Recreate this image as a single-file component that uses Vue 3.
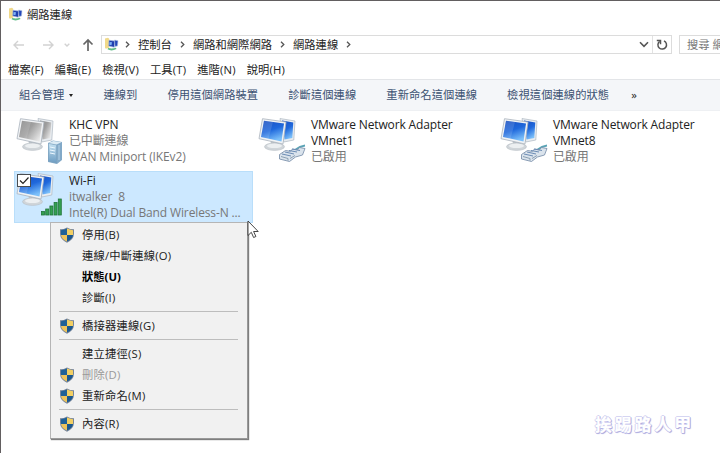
<template>
    <div class="window">
        <!-- Shared icon shapes -->
        <svg class="defs" width="0" height="0" aria-hidden="true">
            <defs>
                <linearGradient id="blue-screen" x1="0.1" y1="0" x2="0.5" y2="1">
                    <stop offset="0" stop-color="#1a4fc0" />
                    <stop offset="0.5" stop-color="#1f68dc" />
                    <stop offset="1" stop-color="#7cc0fa" />
                </linearGradient>
                <linearGradient id="gray-screen" x1="0" y1="0" x2="1" y2="0.7">
                    <stop offset="0" stop-color="#858585" />
                    <stop offset="0.5" stop-color="#a0a0a0" />
                    <stop offset="1" stop-color="#e6e6e6" />
                </linearGradient>
                <linearGradient id="server-front" x1="0" y1="0" x2="0" y2="1">
                    <stop offset="0" stop-color="#c6e2f2" />
                    <stop offset="1" stop-color="#6c9cc2" />
                </linearGradient>
            </defs>
            <symbol id="folder-net" viewBox="0 0 15 15">
                <path d="M1 1.5l3-.8 1.2 1v9l-3.4 1-.8-1z" fill="#f0d98a" />
                <path d="M5 3.2l6 .9-.7 6.2-5.6-1.4z" fill="#1f3fae" stroke="#a9bcdc" stroke-width=".6" />
                <path d="M10.5 3l3.5.7-.5 5.3-2.6.4z" fill="#2447b8" stroke="#b9c8e2" stroke-width=".6" />
                <path d="M5.6 5l2.4.3-.5 3-2.3-.5z" fill="#7fb2f4" />
                <path d="M3.5 12.3q4 2.4 9-.3l-.6-1.2q-4 1.2-7.6.2z" fill="#5fbb86" />
            </symbol>
            <symbol id="shield" viewBox="0 0 16 16">
                <path d="M8 .4Q5 2.2 1 2.3V7q.3 5.6 7 8.7Q14.7 12.6 15 7V2.3Q11 2.2 8 .4z" fill="#75849a" />
                <path d="M8 1.600Q5.500 3 2 3.200V8h6z" fill="#1f6197" />
                <path d="M8 1.600Q10.500 3 14 3.200V8H8z" fill="#f2cf63" />
                <path d="M2 8h6v6.600Q2.500 12 2 8z" fill="#eec45b" />
                <path d="M14 8H8v6.600Q13.500 12 14 8z" fill="#1a578e" />
            </symbol>
        </svg>

        <header class="title-bar">
            <svg class="title-bar__icon"><use href="#folder-net" /></svg>
            <span>網路連線</span>
        </header>

        <div class="address-row">
            <div class="nav">
                <svg class="nav__arrow" viewBox="0 0 14 12"><path d="M12 6H2M6 2L2 6l4 4" /></svg>
                <svg class="nav__arrow" viewBox="0 0 14 12"><path d="M2 6h10M8 2l4 4-4 4" /></svg>
                <svg class="nav__down" viewBox="0 0 6 4"><path d="M.7.7L3 3 5.3.7" /></svg>
                <svg class="nav__up" viewBox="0 0 12 14"><path d="M6 13V2M1.500 6.500L6 2l4.500 4.500" /></svg>
            </div>
            <div class="address">
                <svg class="address__icon"><use href="#folder-net" /></svg>
                <svg class="chevron" viewBox="0 0 5 7"><path d="M1 .8L3.800 3.500 1 6.200" /></svg>
                <template v-for="crumb in crumbs" :key="crumb">
                    <span class="address__crumb">{{ crumb }}</span>
                    <svg class="chevron" viewBox="0 0 5 7"><path d="M1 .8L3.800 3.500 1 6.200" /></svg>
                </template>
                <svg class="address__drop" viewBox="0 0 10 7"><path d="M1 1.300L5 5.300l4-4" /></svg>
                <div class="address__refresh">
                    <svg viewBox="0 0 12 12">
                        <path d="M8 1.900A4.300 4.300 0 1 1 3.600 2.400" />
                        <path d="M.8 1.500h3.700v3.700" />
                    </svg>
                </div>
            </div>
            <div class="search">搜尋 網路連線</div>
        </div>

        <nav class="menu-bar">
            <span v-for="menu in menus" :key="menu">{{ menu }}</span>
        </nav>

        <div class="toolbar">
            <span class="toolbar__organize">組合管理<i class="toolbar__caret"></i></span>
            <span v-for="command in commands" :key="command">{{ command }}</span>
            <span class="toolbar__more">»</span>
        </div>

        <main class="connections">
            <div
                v-for="item in connections"
                :key="item.name"
                class="connection"
                :class="{ 'connection--selected': item.selected }"
            >
                <svg class="connection__icon" viewBox="0 0 52 51">
                    <path d="M24 2.500l15 2.500-1.200 19-10 2z" fill="#e9edf1" stroke="#adb8c2" stroke-width=".7" />
                    <path d="M26 4.500l11.300 2-1 15.500-7.800 1.500z" :fill="screenFill(item)" />
                    <path d="M14.500 25l9 1.500-1 4h-7z" fill="#bcc3c9" />
                    <ellipse cx="18.500" cy="30.700" rx="10" ry="3.700" fill="#d0d5d9" stroke="#b7bec4" stroke-width=".6" />
                    <ellipse cx="18.500" cy="29.800" rx="7.500" ry="2.300" fill="#eceff1" />
                    <path d="M6.500 2.700l23.500 3.300-3 22L3 22.700z" fill="#f1f3f5" stroke="#a9b3bc" stroke-width=".8" />
                    <path d="M8 4.700l20 2.800-2.500 18L5 21z" :fill="screenFill(item)" />
                    <path d="M8 4.700l9 1.300-4.500 16.700L5 21z" fill="#fff" opacity=".13" />

                    <g v-if="item.badge === 'server'">
                        <path d="M34 27l5-2.500 9 1.500v18l-5 4-9-2z" fill="#82a9c8" />
                        <path d="M34.500 27.500l8 1.500v18l-8-2z" fill="url(#server-front)" stroke="#7b9fbb" stroke-width=".5" />
                        <path d="M34.500 27l5-2 8 1.300-5 2.200z" fill="#dcebf4" />
                        <path d="M36 31l5 1M36 34l5 1M36 37l5 1" stroke="#edf8ff" />
                        <path d="M45 29v15" stroke="#b7d3e7" />
                    </g>
                    <g v-else-if="item.badge === 'signal'" fill="#35a052" stroke="#217439" stroke-width=".8">
                        <rect x="27.500" y="40.500" width="3" height="3.500" />
                        <rect x="31.700" y="38" width="3" height="6" />
                        <rect x="35.900" y="35" width="3" height="9" />
                        <rect x="40.100" y="31.500" width="3" height="12.500" />
                        <rect x="44.300" y="28" width="3" height="16" />
                    </g>
                    <g v-else>
                        <path d="M39 34q5-4 10-4.500" fill="none" stroke="#5aa3b5" stroke-width="2" />
                        <path d="M23.500 38.500l6-4 5 .8 2-2.300 5 .8 2-2.300 5.500 1-2.500 6.500-7 2-6 4.500-10-2.500z" fill="#dae3ec" stroke="#7188a4" stroke-width=".8" />
                        <path d="M26 38l9 2M29 36l9 2M33 34.500l8 1.500M36 33l8 1.500" stroke="#6c8cb4" stroke-width="1" />
                        <path d="M25 40.500l7 2v2M34 42.500l5-3" fill="none" stroke="#8297ac" stroke-width=".9" />
                    </g>
                    <g v-if="item.selected">
                        <rect x="3.500" y="3.500" width="13" height="12" fill="#fff" stroke="#4a4d50" />
                        <path d="M6 9.500l3 3 5.500-6" fill="none" stroke="#222" stroke-width="1.200" />
                    </g>
                </svg>
                <div class="connection__text">
                    <div v-for="line in item.title" :key="line">{{ line }}</div>
                    <div
                        v-for="line in item.details"
                        :key="line"
                        class="connection__detail"
                    >{{ line }}</div>
                </div>
            </div>
        </main>

        <!-- Context menu of the selected connection -->
        <div class="context-menu">
            <template v-for="(entry, index) in contextMenu" :key="index">
                <div v-if="entry.separator" class="context-menu__separator"></div>
                <div
                    v-else
                    class="context-menu__item"
                    :class="{
                        'context-menu__item--bold': entry.bold,
                        'context-menu__item--disabled': entry.disabled
                    }"
                >
                    <span class="context-menu__icon">
                        <svg v-if="entry.shield"><use href="#shield" /></svg>
                    </span>
                    <span>{{ entry.label }}</span>
                </div>
            </template>
        </div>

        <svg class="cursor" viewBox="0 0 13 19">
            <path d="M1 1v14.500l3.300-3.200 2.300 5.200 2.300-1-2.300-5h4.600z" fill="#fff" stroke="#333" stroke-width=".9" />
        </svg>

        <div class="watermark">挨踢路人甲</div>
    </div>
</template>

<script setup>
const crumbs = ['控制台', '網路和網際網路', '網路連線']
const menus = ['檔案(F)', '編輯(E)', '檢視(V)', '工具(T)', '進階(N)', '說明(H)']
const commands = ['連線到', '停用這個網路裝置', '診斷這個連線', '重新命名這個連線', '檢視這個連線的狀態']

const connections = [
    { name: 'vpn', title: ['KHC VPN'], details: ['已中斷連線', 'WAN Miniport (IKEv2)'], badge: 'server', offline: true },
    { name: 'vmnet1', title: ['VMware Network Adapter', 'VMnet1'], details: ['已啟用'], badge: 'cable' },
    { name: 'vmnet8', title: ['VMware Network Adapter', 'VMnet8'], details: ['已啟用'], badge: 'cable' },
    { name: 'wifi', title: ['Wi-Fi'], details: ['itwalker  8', 'Intel(R) Dual Band Wireless-N ...'], badge: 'signal', selected: true }
]

const contextMenu = [
    { label: '停用(B)', shield: true },
    { label: '連線/中斷連線(O)' },
    { label: '狀態(U)', bold: true },
    { label: '診斷(I)' },
    { separator: true },
    { label: '橋接器連線(G)', shield: true },
    { separator: true },
    { label: '建立捷徑(S)' },
    { label: '刪除(D)', shield: true, disabled: true },
    { label: '重新命名(M)', shield: true },
    { separator: true },
    { label: '內容(R)', shield: true }
]

const screenFill = (item) => (item.offline ? 'url(#gray-screen)' : 'url(#blue-screen)')
</script>

<style>
body {
    margin: 0;
    overflow: hidden;
}
</style>

<style scoped>
.window {
    position: relative;
    box-sizing: border-box;
    width: 720px;
    height: 453px;
    overflow: hidden;
    border-top: 1px solid #625e60;
    border-left: 1px solid #625e60;
    background: #fff;
    color: #222;
    font-family: "Open Sans", "Noto Sans CJK TC", sans-serif;
    font-size: 11.3px;
    line-height: 16px;
    white-space: pre;
}

.defs {
    position: absolute;
}

.title-bar {
    display: flex;
    align-items: center;
    gap: 4px;
    height: 27px;
    padding-left: 7px;
}

.title-bar__icon {
    width: 15px;
    height: 15px;
}

.address-row {
    display: flex;
    align-items: center;
    height: 33px;
}

.nav {
    flex: none;
    display: flex;
    align-items: center;
    width: 100px;
    fill: none;
    stroke: #d2d2d2;
    stroke-width: 1.4;
}

.nav__arrow {
    width: 14px;
    height: 12px;
    margin-left: 11px;
    margin-right: 4px;
}

.nav__down {
    width: 6px;
    height: 4px;
    margin-left: 5px;
}

.nav__up {
    width: 12px;
    height: 14px;
    margin-left: 12px;
    stroke: #666;
    stroke-width: 1.7;
}

.address {
    flex: none;
    box-sizing: border-box;
    display: flex;
    align-items: center;
    width: 571px;
    height: 19px;
    border: 1px solid #dcdcdc;
}

.address__icon {
    width: 15px;
    height: 15px;
    margin: 0 6px 0 2px;
}

.chevron {
    width: 5px;
    height: 7px;
    margin-right: 1px;
    fill: none;
    stroke: #555;
    stroke-width: 1.3;
}

.address__crumb {
    margin: 0 8px 0 7px;
}

.address__drop {
    width: 10px;
    height: 7px;
    margin-left: auto;
    margin-right: 3px;
    fill: none;
    stroke: #555;
    stroke-width: 1.6;
}

.address__refresh {
    display: flex;
    align-items: center;
    justify-content: center;
    width: 18px;
    height: 17px;
    border-left: 1px solid #e2e2e2;
}

.address__refresh svg {
    width: 12px;
    height: 12px;
    fill: none;
    stroke: #555;
    stroke-width: 1.5;
}

.search {
    flex: none;
    box-sizing: border-box;
    width: 160px;
    height: 19px;
    margin-left: 7px;
    padding-left: 7px;
    border: 1px solid #dcdcdc;
    color: #777;
    line-height: 17px;
}

.menu-bar {
    display: flex;
    align-items: center;
    gap: 11px;
    height: 18px;
    padding-left: 7px;
    letter-spacing: 0.15px;
}

.toolbar {
    box-sizing: border-box;
    display: flex;
    align-items: center;
    gap: 30px;
    height: 32px;
    padding-left: 18px;
    border-top: 1px solid #e3e5e8;
    border-bottom: 1px solid #eef0f3;
    background: #f4f6f9;
    color: #3c5272;
    letter-spacing: 0.05px;
}

.toolbar__organize {
    display: flex;
    align-items: center;
}

.toolbar__caret {
    margin-left: 5px;
    border: 2.5px solid transparent;
    border-top: 3px solid #222;
    border-bottom: 0;
}

.toolbar__more {
    margin-left: -8px;
    color: #222;
}

.connections {
    display: grid;
    grid-template-columns: repeat(3, 239px);
    grid-auto-rows: 52px;
    gap: 3px;
    padding: 5px 0 0 13px;
}

.connection {
    box-sizing: border-box;
    display: flex;
    border: 1px solid transparent;
}

.connection--selected {
    background: #cce8ff;
    border-color: #b9defa;
}

.connection__icon {
    flex: none;
    width: 52px;
    height: 51px;
    margin: -1px 3px 0 -1px;
}

.connection__text {
    font-size: 12px;
    line-height: 16.2px;
    letter-spacing: -0.13px;
}

.connection--selected .connection__text {
    padding-top: 1px;
}

.connection__detail {
    color: #777;
}

.context-menu {
    position: absolute;
    left: 49px;
    top: 221px;
    box-sizing: border-box;
    width: 198px;
    height: 217px;
    padding: 1px;
    border: 1px solid #b5b5b5;
    border-right-color: #999;
    border-bottom-color: #999;
    background: #f1f1f1;
    box-shadow: 1px 1px 1px rgba(0, 0, 0, 0.5);
    line-height: 21px;
    letter-spacing: 0.2px;
}

.context-menu__item {
    display: flex;
    height: 21px;
}

.context-menu__item--bold {
    color: #000;
    font-weight: 700;
    letter-spacing: 0;
}

.context-menu__item--disabled {
    color: #999;
}

.context-menu__icon {
    display: flex;
    align-items: center;
    width: 23px;
    padding-left: 7px;
}

.context-menu__icon svg {
    width: 16px;
    height: 16px;
}

.context-menu__separator {
    height: 1px;
    margin: 3px 8px 3px 7px;
    background: #bdbdbd;
}

.cursor {
    position: absolute;
    left: 246px;
    top: 219px;
    width: 13px;
    height: 19px;
}

.watermark {
    position: absolute;
    left: 594px;
    top: 412px;
    color: #fff;
    font-size: 17px;
    font-weight: 700;
    line-height: 24px;
    letter-spacing: 2.8px;
    text-shadow:
        -1px 0 #d5d5f2,
        0 -1px #d5d5f2,
        1px 0 #b4b4e4,
        0 1px #b4b4e4,
        1px 1px 1px #9c9cd8;
}
</style>
